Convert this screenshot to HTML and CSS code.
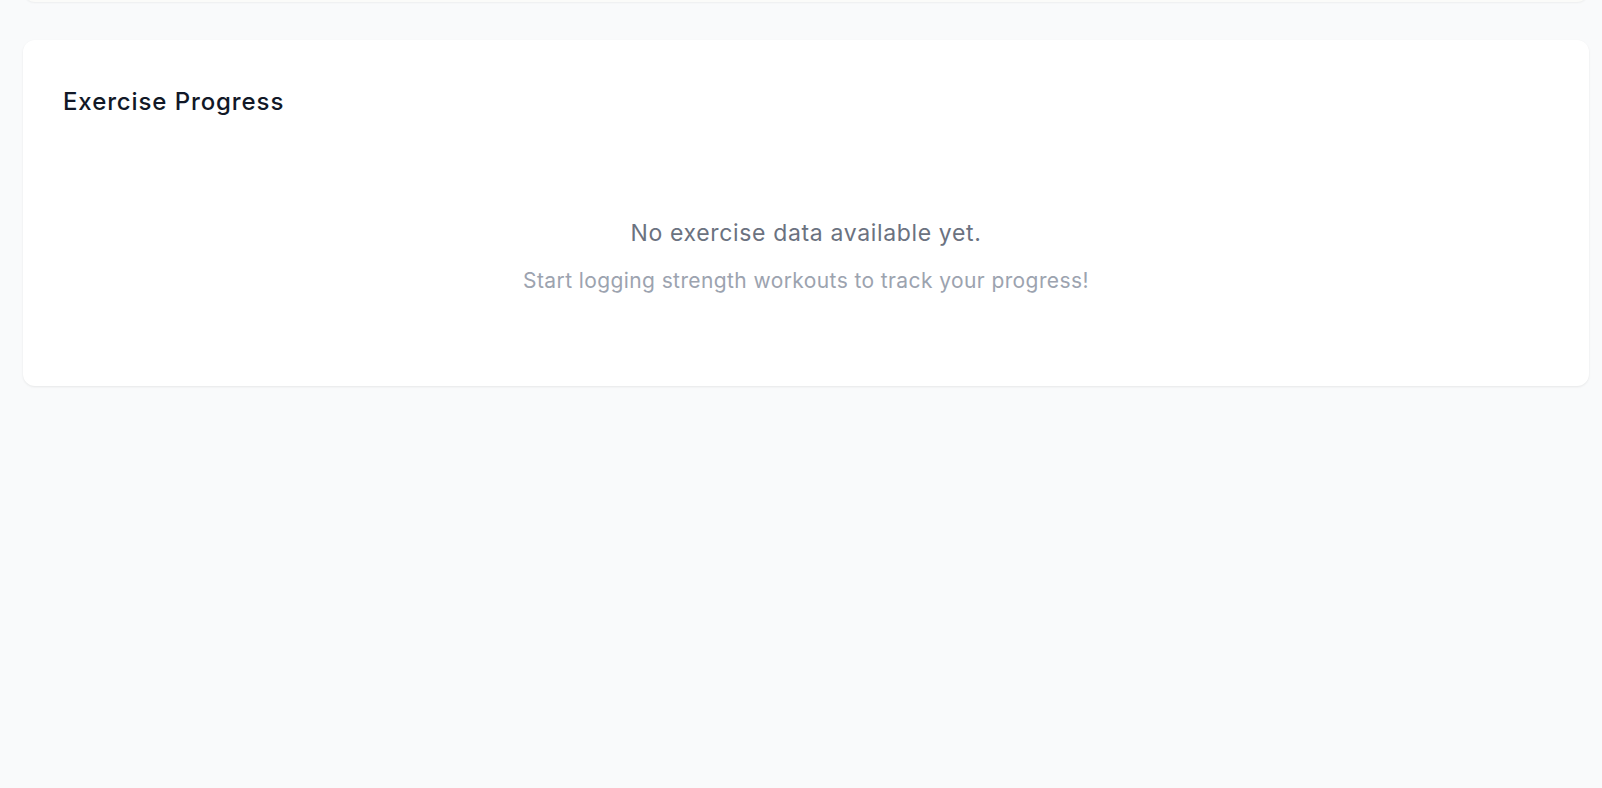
FILE: index.html
```html
<!DOCTYPE html>
<html lang="en">
<head>
<meta charset="utf-8">
<title>Exercise Progress</title>
<link rel="stylesheet" href="styles.css">
</head>
<body>
<div class="page">
  <div class="prev-card"></div>
  <section class="card">
    <h2 class="card-title">Exercise Progress</h2>
    <div class="empty">
      <p class="empty-main">No exercise data available yet.</p>
      <p class="empty-sub">Start logging strength workouts to track your progress!</p>
    </div>
  </section>
</div>
</body>
</html>
```

FILE: styles.css
```css
* { box-sizing: border-box; }
html, body {
  margin: 0;
  padding: 0;
  background: #f9fafb;
  font-family: Inter, "Noto Sans", sans-serif;
  height: 100%;
}
.page {
  padding: 0 13px 0 23px;
}
.prev-card {
  height: 40px;
  margin-top: -38px;
  background: #fbfbf9;
  border-radius: 12px;
  box-shadow: 0 1px 2px rgba(0,0,0,0.05);
}
.card {
  margin-top: 38px;
  background: #ffffff;
  border-radius: 12px;
  box-shadow: 0 1px 3px rgba(0,0,0,0.05), 0 1px 2px rgba(0,0,0,0.03);
  padding: 46px 40px 40px;
}
.card-title {
  margin: 0;
  font-size: 24px;
  line-height: 32px;
  font-weight: 500;
  letter-spacing: 0.9px;
  color: #111827;
}
.empty {
  text-align: center;
  padding: 101px 0 51px;
}
.empty-main {
  margin: 0;
  font-size: 23px;
  line-height: 28px;
  letter-spacing: 0.65px;
  color: #6b7280;
}
.empty-sub {
  margin: 20px 0 0;
  font-size: 21px;
  line-height: 28px;
  letter-spacing: 0.4px;
  color: #9ca3af;
}
```
